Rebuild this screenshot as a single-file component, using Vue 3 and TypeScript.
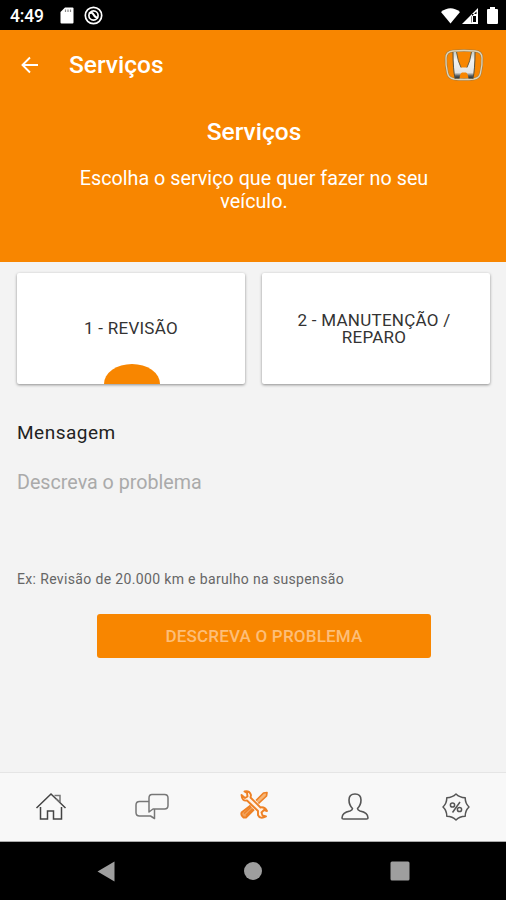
<script setup lang="ts">
import { ref } from 'vue'

interface Service {
  id: number
  label: string
}

const services: Service[] = [
  { id: 1, label: '1 - REVISÃO' },
  { id: 2, label: '2 - MANUTENÇÃO / REPARO' },
]
const selected = ref<number>(1)
const message = ref<string>('')
</script>

<template>
  <div class="screen">
    <div class="status">
      <span class="clock">4:49</span>
      <svg class="sd" width="14" height="17" viewBox="0 0 14 17">
        <path d="M5 .5H12.5Q13.5 .5 13.5 1.5V15.500Q13.500 16.500 12.500 16.500H1.500Q.5 16.500 .5 15.500V5Z" fill="#fff" />
        <path d="M5.500 2.500V5M8 2.500V5M10.500 2.500V5" stroke="#888" stroke-width="1.200" />
      </svg>
      <svg class="sync" width="19" height="19" viewBox="0 0 19 19" fill="none" stroke="#fff">
        <circle cx="9.500" cy="9.500" r="8.200" stroke-width="1.700" />
        <circle cx="9.500" cy="9.500" r="4.600" stroke-width="1.700" />
        <path d="M5 7.500Q8 5.500 9.500 8.500T14 12" stroke-width="2" />
      </svg>
      <div class="signals">
        <svg width="19" height="16" viewBox="0 0 19 16"><path d="M0 4Q9.500-3.500 19 4L9.500 15.500Z" fill="#fff" /></svg>
        <svg width="17" height="16" viewBox="0 0 17 16">
          <path d="M0 16L16 0V16Z" fill="#fff" />
          <path d="M9.500 8.500L14.500 3.500V6H10V14.500H9.500Z" fill="#000" />
          <path d="M11 8H14V14H11Z" fill="#000" />
        </svg>
        <svg class="battery" width="11" height="17" viewBox="0 0 11 17"><path d="M3 0H8V2H10Q11 2 11 3V16Q11 17 10 17H1Q0 17 0 16V3Q0 2 1 2H3Z" fill="#fff" /></svg>
      </div>
    </div>

    <header class="hero">
      <div class="toolbar">
        <svg class="back" width="18" height="18" viewBox="0 0 18 18" fill="none" stroke="#fff" stroke-width="1.900"><path d="M17 9H2M9 1.500L1.500 9L9 16.500" /></svg>
        <span class="title">Serviços</span>
        <svg class="brand" width="40" height="33" viewBox="0 0 40 33">
          <defs>
            <linearGradient id="chrome" x1="0" y1="0" x2="0" y2="1">
              <stop offset="0" stop-color="#c9cdc4" />
              <stop offset=".3" stop-color="#f3f3f1" />
              <stop offset=".78" stop-color="#e2e3e2" />
              <stop offset=".9" stop-color="#555b5d" />
              <stop offset="1" stop-color="#252b2e" />
            </linearGradient>
          </defs>
          <path d="M9 2Q20 1 31 2Q38 2.500 38 9Q38.500 16 36.500 24Q35.500 29 30 30Q20 31 10 30Q4.500 29 3.500 24Q1.500 16 2 9Q2 2.500 9 2Z" fill="none" stroke="#a27a3e" stroke-width="2.400" />
          <path d="M9 2Q20 1 31 2Q38 2.500 38 9Q38.500 16 36.500 24Q35.500 29 30 30Q20 31 10 30Q4.500 29 3.500 24Q1.500 16 2 9Q2 2.500 9 2Z" fill="none" stroke="#ddd3b8" stroke-width="1.300" />
          <path d="M9 3H12.500Q14 13 17 18.500H23Q26 13 27.500 3H31Q31 20 29 29.500H24.500Q24 24.500 22 23.500H18Q16 24.500 15.500 29.500H11Q9 20 9 3Z" fill="url(#chrome)" />
          <path d="M9 3Q9 20 11 29.500M31 3Q31 20 29 29.500" fill="none" stroke="#57523f" stroke-width="1" />
          <path d="M12.500 3Q14 13 17 18.500M23 18.500Q26 13 27.500 3" fill="none" stroke="#5e5842" stroke-width=".9" />
        </svg>
      </div>
      <h1>Serviços</h1>
      <p>Escolha o serviço que quer fazer no seu veículo.</p>
    </header>

    <main>
      <div class="cards">
        <button v-for="s in services" :key="s.id" class="card" @click="selected = s.id">
          <span>{{ s.label }}</span>
          <i v-if="selected === s.id" class="marker"></i>
        </button>
      </div>
      <label for="message">Mensagem</label>
      <textarea id="message" v-model="message" placeholder="Descreva o problema"></textarea>
      <div class="example">Ex: Revisão de 20.000 km e barulho na suspensão</div>
      <button class="submit" :disabled="!message">DESCREVA O PROBLEMA</button>
    </main>

    <nav class="tabs">
      <div class="tab">
        <svg width="32" height="30" viewBox="0 0 32 30" fill="none" stroke="#444" stroke-width="1.500">
          <path d="M1.500 16L16 2L30.500 16M5.500 15V27H12.500V19H18.500V27H26.500V15" />
          <path d="M19.500 3.500H25V10M21 6.500L25 10" stroke="#777" />
        </svg>
      </div>
      <div class="tab">
        <svg width="36" height="30" viewBox="0 0 36 30" fill="none" stroke="#777" stroke-width="1.500" stroke-linejoin="round">
          <path d="M18 2.500H30.500Q34 2.500 34 6V13.500Q34 17 30.500 17H19L15 20V6Q15 2.500 18 2.500Z" />
          <path d="M15 9.500H5.500Q2 9.500 2 13V20.500Q2 24 5.500 24H16.500L20.500 26.500V17" />
        </svg>
      </div>
      <div class="tab tools">
        <svg width="30" height="30" viewBox="0 0 30 30" fill="none" stroke="#ee8125" stroke-linejoin="round">
          <path d="M11.500 15.500L2.500 22.500Q1.500 25 4.500 27.500H7L15 19.500" fill="#f2a35d" stroke-width="1.800" />
          <path d="M5 23.500L12 17M7 25.500L13.500 19" stroke-width="1.300" />
          <path d="M17 10.500L24.500 3L28 2.500L27.500 6L19.500 13.500" fill="#f7b676" stroke-width="1.700" />
          <path d="M2.500 5L6 8L8.500 6.500L8 3L5.500 1.500Q10.500 .5 12 5L11.500 7.500L21.500 17.500Q25.500 16.500 28 21L25 20L22.500 22.500L23.500 25.500L27 26.500Q21 29.500 19 25L19 21L8 10.500Q3 11.500 2.500 5Z" fill="#fff3e8" stroke-width="1.900" />
        </svg>
      </div>
      <div class="tab">
        <svg width="30" height="30" viewBox="0 0 30 30" fill="none" stroke="#555" stroke-width="1.600" stroke-linejoin="round">
          <path d="M12.500 16.500Q9 13 9 8Q9 2 15 2T21 8Q21 13 17.500 16.500Q17.500 18 20 19Q28 20.500 28 26Q28 27 26.500 27H3.500Q2 27 2 26Q2 20.500 10 19Q12.500 18 12.500 16.500Z" />
        </svg>
      </div>
      <div class="tab">
        <svg width="30" height="30" viewBox="0 0 30 30" fill="none" stroke="#555" stroke-width="1.500" stroke-linejoin="round">
          <path d="M15 2Q18.500 5.500 24.200 5.800Q24.200 11.500 28 15Q24.200 18.500 24.200 24.200Q18.500 24.200 15 28Q11.500 24.200 5.800 24.200Q5.800 18.500 2 15Q5.800 11.500 5.800 5.800Q11.500 5.500 15 2Z" />
          <circle cx="11.500" cy="13" r="2.100" /><circle cx="18.500" cy="17.500" r="2.100" /><path d="M19 10L11.500 20.500" />
        </svg>
      </div>
    </nav>

    <div class="system">
      <svg width="18" height="21" viewBox="0 0 18 21"><path d="M17.500 .5V20.500L.5 10.500Z" fill="#9e9e9e" /></svg>
      <svg width="18" height="18" viewBox="0 0 18 18"><circle cx="9" cy="9" r="9" fill="#9e9e9e" /></svg>
      <svg width="20" height="20" viewBox="0 0 20 20"><rect x=".5" y=".5" width="19" height="19" rx="1.500" fill="#9e9e9e" /></svg>
    </div>
  </div>
</template>

<style>
body {
  margin: 0;
}
</style>

<style scoped>
.screen {
  display: flex;
  flex-direction: column;
  width: 506px;
  height: 900px;
  background: #f3f3f3;
  font-family: Roboto, "Liberation Sans", sans-serif;
  overflow: hidden;
}
.screen * {
  box-sizing: border-box;
}
svg {
  display: block;
  flex: none;
}
button {
  font-family: inherit;
  border: 0;
  margin: 0;
}
.status {
  height: 30px;
  flex: none;
  display: flex;
  align-items: center;
  padding: 1px 8px 0 10px;
  background: #000;
  color: #fff;
}
.clock {
  width: 50px;
  font-size: 17.5px;
  font-weight: 500;
  line-height: 20px;
  letter-spacing: -.2px;
}
.sync {
  margin-left: 10px;
}
.signals {
  display: flex;
  align-items: center;
  gap: 2px;
  margin-left: auto;
}
.battery {
  margin-left: 6px;
}
.hero {
  height: 232px;
  flex: none;
  background: #f88600;
  color: #fff;
  text-align: center;
}
.toolbar {
  height: 70px;
  display: flex;
  align-items: center;
  padding: 0 22px 0 21px;
}
.title {
  margin: -1px 0 0 30px;
  font-size: 24.5px;
  font-weight: 500;
  line-height: 28px;
}
.brand {
  margin-left: auto;
}
h1 {
  margin: 18px 0 0;
  padding-left: 2px;
  font-size: 24.5px;
  font-weight: 500;
  line-height: 28px;
}
p {
  margin: 21px 52px 0 54px;
  font-size: 19.75px;
  line-height: 23px;
}
main {
  flex: 1;
  display: flex;
  flex-direction: column;
  padding: 11px 16px 0 17px;
}
.cards {
  display: grid;
  grid-template-columns: 1fr 1fr;
  gap: 17px;
}
.card {
  position: relative;
  height: 111px;
  padding: 0 30px;
  background: #fff;
  border-radius: 2px;
  box-shadow: 0 1px 3px rgba(0, 0, 0, .42);
  overflow: hidden;
  color: #333;
  font-size: 17px;
  line-height: 17px;
  letter-spacing: .25px;
}
.card:last-child {
  padding: 0 33px 0 29px;
}
.marker {
  position: absolute;
  left: 50%;
  bottom: 0;
  width: 56px;
  height: 20px;
  margin-left: -27.5px;
  border-radius: 50% 50% 0 0 / 100% 100% 0 0;
  background: #f88600;
}
label {
  margin-top: 37px;
  font-size: 19px;
  line-height: 24px;
  letter-spacing: .5px;
  color: #222;
}
textarea {
  display: block;
  height: 89px;
  margin-top: 26px;
  padding: 0;
  border: 0;
  outline: 0;
  resize: none;
  background: transparent;
  font-family: inherit;
  font-size: 19.7px;
  line-height: 24px;
  color: #222;
}
textarea::placeholder {
  color: #aaa;
  opacity: 1;
}
.example {
  margin-top: 10px;
  font-size: 14px;
  line-height: 18px;
  letter-spacing: .35px;
  color: #666;
}
.submit {
  width: 334px;
  height: 44px;
  margin: 26px 0 0 80px;
  padding: 0;
  border-radius: 3px;
  background: #f88600;
  color: #fdbe78;
  font-size: 17px;
  font-weight: 500;
  letter-spacing: .2px;
}
.tabs {
  flex: none;
  height: 70px;
  display: grid;
  grid-template-columns: repeat(5, 1fr);
  border-top: 1px solid #e5e5e5;
  border-bottom: 1px solid #aaa;
  background: #f8f8f8;
}
.tab {
  display: flex;
  align-items: center;
  justify-content: center;
}
.tab:nth-child(n + 3) {
  padding-left: 2px;
}
.tools {
  padding-bottom: 4px;
}
.system {
  flex: none;
  height: 58px;
  display: flex;
  align-items: center;
  justify-content: space-between;
  padding: 0 96px 0 97px;
  background: #000;
}
</style>
